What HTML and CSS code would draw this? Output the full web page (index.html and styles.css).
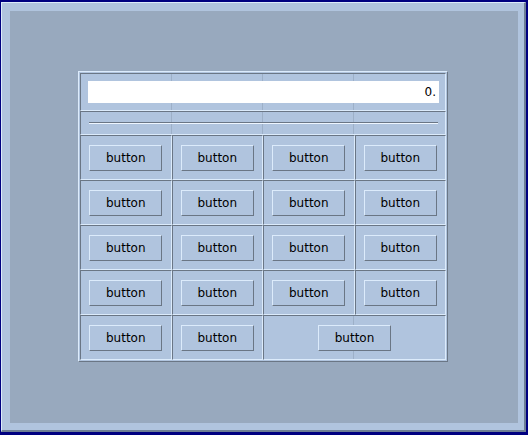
FILE: index.html
```
<!DOCTYPE html>
<html>
<head>
<meta charset="utf-8">
<link rel="stylesheet" href="styles.css">
</head>
<body>
<div class="outer">
  <div class="frame">
    <div class="interior">
      <div class="panel">
        <div class="cell span4 display-cell"><div class="display">0.</div></div>
        <div class="cell span4 slider-cell"><div class="groove"></div></div>
        <div class="cell"><button class="btn">button</button></div>
        <div class="cell"><button class="btn">button</button></div>
        <div class="cell"><button class="btn">button</button></div>
        <div class="cell"><button class="btn">button</button></div>
        <div class="cell"><button class="btn">button</button></div>
        <div class="cell"><button class="btn">button</button></div>
        <div class="cell"><button class="btn">button</button></div>
        <div class="cell"><button class="btn">button</button></div>
        <div class="cell"><button class="btn">button</button></div>
        <div class="cell"><button class="btn">button</button></div>
        <div class="cell"><button class="btn">button</button></div>
        <div class="cell"><button class="btn">button</button></div>
        <div class="cell"><button class="btn">button</button></div>
        <div class="cell"><button class="btn">button</button></div>
        <div class="cell"><button class="btn">button</button></div>
        <div class="cell"><button class="btn">button</button></div>
        <div class="cell"><button class="btn">button</button></div>
        <div class="cell"><button class="btn">button</button></div>
        <div class="cell span2"><button class="btn">button</button></div>
      </div>
    </div>
  </div>
</div>
</body>
</html>
```
FILE: styles.css
```
html, body {
  margin: 0;
  padding: 0;
}
body {
  width: 528px;
  height: 435px;
  overflow: hidden;
  font-family: "DejaVu Sans", sans-serif;
}
.outer {
  box-sizing: border-box;
  width: 528px;
  height: 435px;
  background: #000080;
  padding: 2px 2px 3px 1px;
}
.frame {
  box-sizing: border-box;
  width: 100%;
  height: 100%;
  background: #b0c4de;
  border-top: 1px solid #dcebfb;
  border-left: 1px solid #dcebfb;
  border-right: 2px solid #6e7f95;
  border-bottom: 2px solid #6e7f95;
  padding: 8px 6px 7px 8px;
}
.interior {
  box-sizing: border-box;
  width: 100%;
  height: 100%;
  background: #98a9be;
  padding: 60px 0 0 68px;
}
.panel {
  box-sizing: border-box;
  width: 370px;
  height: 291px;
  background: #b0c4de;
  border-top: 1px solid #dcebfb;
  border-left: 1px solid #dcebfb;
  border-right: 1px solid #6a7685;
  border-bottom: 1px solid #6a7685;
  padding: 1px;
  display: grid;
  grid-template-columns: repeat(4, 1fr);
  grid-template-rows: 38px 24px repeat(5, 45px);
}
.cell {
  box-sizing: border-box;
  border-top: 1px solid #6a7685;
  border-left: 1px solid #6a7685;
  border-right: 1px solid #dcebfb;
  border-bottom: 1px solid #dcebfb;
  padding-top: 1px;
  display: flex;
  align-items: center;
  justify-content: center;
  min-width: 0;
}
.span4 {
  grid-column: span 4;
  background-image:
    linear-gradient(to right, transparent calc(25% - 1px), #9db0c8 calc(25% - 1px), #9db0c8 25%, transparent 25%),
    linear-gradient(to right, transparent calc(50% - 1px), #9db0c8 calc(50% - 1px), #9db0c8 50%, transparent 50%),
    linear-gradient(to right, transparent calc(75% - 1px), #9db0c8 calc(75% - 1px), #9db0c8 75%, transparent 75%);
}
.span2 {
  grid-column: span 2;
  background-image:
    linear-gradient(to right, transparent calc(50% - 1px), #9db0c8 calc(50% - 1px), #9db0c8 50%, transparent 50%);
}
.display-cell {
  padding: 7px 6px 7px 7px;
  align-items: stretch;
}
.display {
  flex: 1;
  background: #ffffff;
  color: #000000;
  font-size: 12px;
  line-height: 22px;
  text-align: right;
  padding-right: 3px;
}
.slider-cell {
  padding: 0 7px 1px 8px;
}
.groove {
  flex: 1;
  height: 0;
  border-top: 1px solid #6a7685;
  border-bottom: 1px solid #eef6ff;
}
.btn {
  box-sizing: border-box;
  width: 73px;
  height: 26px;
  margin: 0;
  padding: 0;
  background: #b0c4de;
  border-top: 1px solid #dcebfb;
  border-left: 1px solid #dcebfb;
  border-right: 1px solid #6a7685;
  border-bottom: 1px solid #6a7685;
  font-family: "DejaVu Sans", sans-serif;
  font-size: 12px;
  color: #000000;
  line-height: 24px;
}
```
